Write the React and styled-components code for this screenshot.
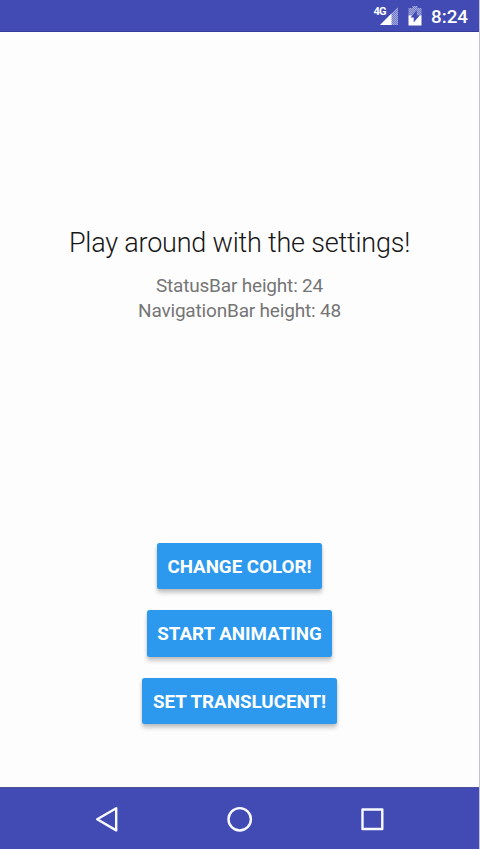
import React from "react";
import styled, { createGlobalStyle } from "styled-components";

const GlobalStyle = createGlobalStyle`
  * { box-sizing: border-box; }
  body { margin: 0; background: #fefdfe; overflow: hidden; }
`;

const Screen = styled.div`
  width: 480px;
  height: 849px;
  display: flex;
  flex-direction: column;
  background: #fefdfe;
  border-right: 1px solid #c3c3c9;
  font-family: Roboto, sans-serif;
`;

const StatusBar = styled.header`
  height: 32px;
  flex: none;
  display: flex;
  justify-content: flex-end;
  align-items: flex-start;
  background: #424bb3;
  border-bottom: 1px solid #363b98;
  padding: 0 11px 0 0;
  color: #fff;
`;

const NetworkLabel = styled.span`
  font-size: 11px;
  line-height: 12px;
  font-weight: 700;
  letter-spacing: -0.9px;
  margin: 6px -6.5px 0 0;
`;

const StatusIcon = styled.svg`
  display: block;
  margin: ${({ $margin }) => $margin};
`;

const Clock = styled.time`
  width: 37px;
  font-size: 18.8px;
  line-height: 22px;
  margin-top: 6px;
  font-weight: 500;
  white-space: nowrap;
`;

const Content = styled.main`
  flex: 1;
  display: flex;
  flex-direction: column;
  justify-content: space-between;
  align-items: center;
  padding: 194px 0 63px;
`;

const Message = styled.section`
  display: flex;
  flex-direction: column;
  align-items: center;
  text-align: center;
`;

const Title = styled.h1`
  margin: 0 0 12px;
  font-size: 27px;
  line-height: 35px;
  font-weight: 300;
  letter-spacing: -0.21px;
  color: #171717;
  white-space: nowrap;
`;

const Detail = styled.p`
  margin: 0;
  font-size: 19px;
  line-height: 25px;
  letter-spacing: -0.18px;
  color: #757575;
  white-space: nowrap;
`;

const Actions = styled.div`
  display: flex;
  flex-direction: column;
  align-items: center;
  gap: 21px;
`;

const ActionButton = styled.button`
  width: ${({ $width }) => $width}px;
  height: 46.5px;
  padding: 2px 0 0;
  border: 0;
  border-radius: 2.5px;
  background: #2c99ee;
  box-shadow: 0 4px 4px rgba(0, 0, 0, 0.2), 0 1px 3px rgba(0, 0, 0, 0.1);
  color: #fff;
  font: 700 18.75px/22px Roboto, sans-serif;
  white-space: nowrap;
`;

const NavigationBar = styled.nav`
  height: 62px;
  flex: none;
  display: flex;
  justify-content: center;
  gap: 101px;
  padding-top: 15px;
  background: #424bb3;
  border-top: 1px solid #50549b;
`;

const NavButton = styled.button`
  width: 32px;
  height: 32px;
  padding: 0;
  border: 0;
  background: none;
`;

const NavIcon = styled.svg`
  display: block;
  fill: none;
  stroke: #f8faff;
  stroke-width: 2.4;
  stroke-linejoin: round;
`;

const actions = [
  { label: "CHANGE COLOR!", width: 165 },
  { label: "START ANIMATING", width: 185 },
  { label: "SET TRANSLUCENT!", width: 195 },
];

export default function App() {
  return (
    <>
      <GlobalStyle />
      <Screen>
        <StatusBar>
          <NetworkLabel>4G</NetworkLabel>
          <StatusIcon width="20" height="20" viewBox="0 0 20 20" $margin="6px 9px 0 0">
            <defs>
              <pattern id="mesh" width="2" height="2" patternUnits="userSpaceOnUse">
                <rect width="2" height="2" fill="#737bc9" />
                <path d="M0 0h1v1H0ZM1 1h1v1H1Z" fill="#a2a8dd" />
              </pattern>
            </defs>
            <path d="M19 1v18H1Z" fill="url(#mesh)" />
            <path d="M12.5 7.5V19H1Z" fill="#fff" />
          </StatusIcon>
          <StatusIcon width="14" height="20" viewBox="0 0 14 20" $margin="6px 9px 0 0">
            <path d="M4.5 0h5v2H13.5v8H0.5V2h4Z" fill="url(#mesh)" />
            <path d="M.5 9.5h13v10H.5Z" fill="#fff" />
            <path d="M8.8 4v5.3h3L5.7 16.5v-5H2.5Z" fill="#424bb3" />
          </StatusIcon>
          <Clock>8:24</Clock>
        </StatusBar>
        <Content>
          <Message>
            <Title>Play around with the settings!</Title>
            <Detail>StatusBar height: 24</Detail>
            <Detail>NavigationBar height: 48</Detail>
          </Message>
          <Actions>
            {actions.map(({ label, width }) => (
              <ActionButton key={label} $width={width}>{label}</ActionButton>
            ))}
          </Actions>
        </Content>
        <NavigationBar>
          <NavButton aria-label="Back">
            <NavIcon width="32" height="32" viewBox="0 0 32 32">
              <path d="M25.2 5.2v22.2L6.2 16.3Z" />
            </NavIcon>
          </NavButton>
          <NavButton aria-label="Home">
            <NavIcon width="32" height="32" viewBox="0 0 32 32">
              <circle cx="15.7" cy="16.3" r="11.2" />
            </NavIcon>
          </NavButton>
          <NavButton aria-label="Recent apps">
            <NavIcon width="32" height="32" viewBox="0 0 32 32">
              <rect x="5.5" y="6.5" width="19.8" height="19.5" />
            </NavIcon>
          </NavButton>
        </NavigationBar>
      </Screen>
    </>
  );
}
